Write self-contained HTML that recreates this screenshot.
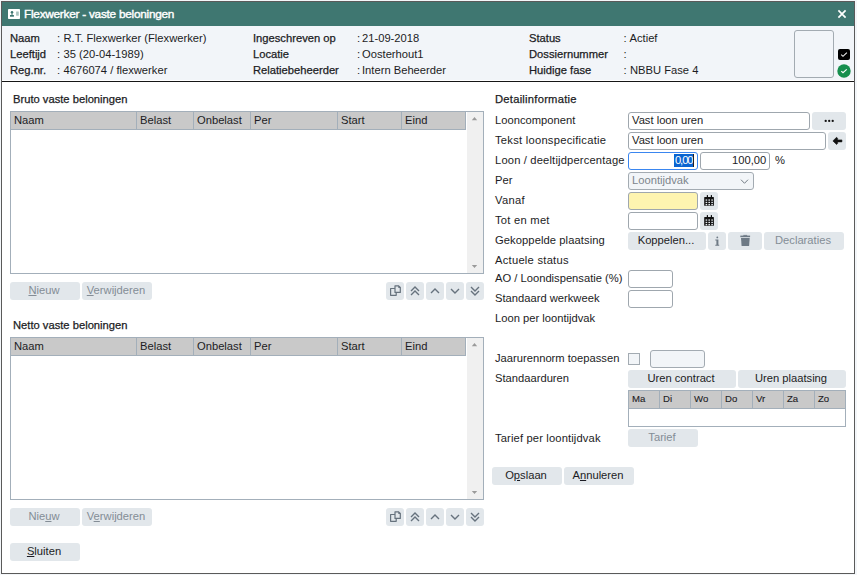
<!DOCTYPE html><html><head><meta charset="utf-8"><style>
*{margin:0;padding:0;box-sizing:border-box}
html,body{width:857px;height:575px;overflow:hidden;background:#f3f6f9}
body{position:relative;font-family:"Liberation Sans",sans-serif;font-size:11.2px;color:#1c1c24}
.a{position:absolute}
.t{position:absolute;white-space:nowrap;line-height:16px;height:16px}
.m{-webkit-text-stroke:0.25px #1c1c24}
.btn{position:absolute;background:#e2e7eb;border-radius:3px;text-align:center;line-height:16px;white-space:nowrap;padding-right:2px}
.dis{color:#848d96}
.inp{position:absolute;background:#fff;border:1px solid #9fa7ae;border-radius:3px}
.u{text-decoration:underline;text-underline-offset:0.5px}
</style></head><body><div class="a" style="left:0px;top:0px;width:857px;height:575px;background:#f3f6f9"></div>
<div class="a" style="left:1px;top:1px;width:854px;height:573px;border:1px solid #5a5a5a;background:#fff"></div>
<div class="a" style="left:2px;top:2px;width:852px;height:24px;background:#3f7771"></div>
<div class="a" style="left:2px;top:26px;width:852px;height:54px;background:#f2f5f9"></div>
<div class="a" style="left:2px;top:81px;width:852px;height:1px;background:#161616"></div>
<svg class="a" style="left:8px;top:9px" width="12" height="10" viewBox="0 0 12 10"><rect x="0" y="0" width="12" height="10" rx="0.8" fill="#fff"/><circle cx="4" cy="3.2" r="1.25" fill="#3f7771"/><rect x="3.5" y="3.5" width="1" height="2.8" fill="#3f7771"/><rect x="2" y="6" width="3.9" height="1.7" fill="#3f7771"/><rect x="8.1" y="2.4" width="2.7" height="4.4" rx="0.4" fill="#a9c3bf"/></svg>
<div class="t " style="left:24px;top:6px;color:#fff;font-size:11.8px;-webkit-text-stroke:0.4px #fff;letter-spacing:-0.25px">Flexwerker - vaste beloningen</div>
<svg class="a" style="left:837px;top:9px" width="11" height="11" viewBox="0 0 11 11"><path d="M1.4 1.4L8.6 8.6M8.6 1.4L1.4 8.6" stroke="#fff" stroke-width="1.7"/></svg>
<div class="t m" style="left:10px;top:30px;">Naam</div>
<div class="t " style="left:57px;top:30px;">:</div>
<div class="t " style="left:63.5px;top:30px;">R.T. Flexwerker (Flexwerker)</div>
<div class="t m" style="left:253px;top:30px;">Ingeschreven op</div>
<div class="t " style="left:357px;top:30px;">:</div>
<div class="t " style="left:362px;top:30px;">21-09-2018</div>
<div class="t m" style="left:529px;top:30px;">Status</div>
<div class="t " style="left:623.5px;top:30px;">:</div>
<div class="t " style="left:629.5px;top:30px;">Actief</div>
<div class="t m" style="left:10px;top:46px;">Leeftijd</div>
<div class="t " style="left:57px;top:46px;">:</div>
<div class="t " style="left:63.5px;top:46px;">35 (20-04-1989)</div>
<div class="t m" style="left:253px;top:46px;">Locatie</div>
<div class="t " style="left:357px;top:46px;">:</div>
<div class="t " style="left:362px;top:46px;">Oosterhout1</div>
<div class="t m" style="left:529px;top:46px;">Dossiernummer</div>
<div class="t " style="left:623.5px;top:46px;">:</div>
<div class="t " style="left:630px;top:46px;"></div>
<div class="t m" style="left:10px;top:62px;">Reg.nr.</div>
<div class="t " style="left:57px;top:62px;">:</div>
<div class="t " style="left:63.5px;top:62px;">4676074 / flexwerker</div>
<div class="t m" style="left:253px;top:62px;">Relatiebeheerder</div>
<div class="t " style="left:357px;top:62px;">:</div>
<div class="t " style="left:362px;top:62px;">Intern Beheerder</div>
<div class="t m" style="left:529px;top:62px;">Huidige fase</div>
<div class="t " style="left:623.5px;top:62px;">:</div>
<div class="t " style="left:630px;top:62px;">NBBU Fase 4</div>
<div class="a" style="left:794px;top:30px;width:40px;height:48px;border:1px solid #a3abb2;border-radius:3px;background:#f2f5f9"></div>
<svg class="a" style="left:838px;top:49px" width="12" height="11" viewBox="0 0 12 11"><rect x="0" y="0" width="12" height="11" rx="2" fill="#000"/><path d="M3.2 5.6L5 7.3L8.9 3.6" stroke="#eee" stroke-width="1.1" fill="none"/></svg>
<svg class="a" style="left:837px;top:64.2px" width="14" height="14" viewBox="0 0 14 14"><circle cx="7" cy="7" r="6.7" fill="#168f4e"/><path d="M4.3 7.1L6 8.7L9.7 5.3" stroke="#fff" stroke-width="1.15" fill="none"/></svg>
<div class="t m" style="left:13px;top:91px;">Bruto vaste beloningen</div>
<div class="a" style="left:10px;top:111px;width:474px;height:163px;border:1px solid #a3afba;background:#fff"></div>
<div class="a" style="left:11px;top:112px;width:455px;height:18px;background:#c9c9c9;border-bottom:1px solid #a3afba;border-right:1px solid #a3afba"></div>
<div class="t " style="left:14px;top:112px;">Naam</div>
<div class="a" style="left:136px;top:112px;width:1px;height:18px;background:#a3afba"></div>
<div class="t " style="left:140px;top:112px;">Belast</div>
<div class="a" style="left:193px;top:112px;width:1px;height:18px;background:#a3afba"></div>
<div class="t " style="left:197px;top:112px;">Onbelast</div>
<div class="a" style="left:250px;top:112px;width:1px;height:18px;background:#a3afba"></div>
<div class="t " style="left:254px;top:112px;">Per</div>
<div class="a" style="left:337px;top:112px;width:1px;height:18px;background:#a3afba"></div>
<div class="t " style="left:341px;top:112px;">Start</div>
<div class="a" style="left:401px;top:112px;width:1px;height:18px;background:#a3afba"></div>
<div class="t " style="left:405px;top:112px;">Eind</div>
<div class="a" style="left:467px;top:112px;width:16px;height:161px;background:#f0f0f0"></div>
<svg class="a" style="left:471px;top:116px" width="7" height="5" viewBox="0 0 7 5"><path d="M0.8 4.2L3.5 1L6.2 4.2Z" fill="#9a9a9a"/></svg>
<svg class="a" style="left:471px;top:264px" width="7" height="5" viewBox="0 0 7 5"><path d="M0.8 0.9L3.5 4.1L6.2 0.9Z" fill="#9a9a9a"/></svg>
<div class="btn dis" style="left:10px;top:282px;width:70px;height:18px"><span class="u">N</span>ieuw</div>
<div class="btn dis" style="left:82px;top:282px;width:70px;height:18px"><span class="u">V</span>erwijderen</div>
<div class="btn" style="left:386px;top:282px;width:18px;height:18px"><svg width="18" height="18" viewBox="0 0 18 18" style="display:block"><path d="M9 10.4V3.8H12.6L14.3 5.5V10.4Z" fill="none" stroke="#66727d" stroke-width="1.2" stroke-linejoin="round"/><path d="M12.3 3.6V6H14.6Z" fill="#66727d"/><path d="M9 6.5H4.6V13.3H10.2V10.4" fill="none" stroke="#66727d" stroke-width="1.2" stroke-linejoin="round"/></svg></div>
<div class="btn" style="left:406px;top:282px;width:18px;height:18px"><svg width="18" height="18" viewBox="0 0 18 18" style="display:block"><path d="M5 9L9 5L13 9M5 13L9 9L13 13" fill="none" stroke="#66727d" stroke-width="1.4"/></svg></div>
<div class="btn" style="left:426px;top:282px;width:18px;height:18px"><svg width="18" height="18" viewBox="0 0 18 18" style="display:block"><path d="M5 11L9 7L13 11" fill="none" stroke="#66727d" stroke-width="1.4"/></svg></div>
<div class="btn" style="left:446px;top:282px;width:18px;height:18px"><svg width="18" height="18" viewBox="0 0 18 18" style="display:block"><path d="M5 7L9 11L13 7" fill="none" stroke="#66727d" stroke-width="1.4"/></svg></div>
<div class="btn" style="left:466px;top:282px;width:18px;height:18px"><svg width="18" height="18" viewBox="0 0 18 18" style="display:block"><path d="M5 5L9 9L13 5M5 9L9 13L13 9" fill="none" stroke="#66727d" stroke-width="1.4"/></svg></div>
<div class="t m" style="left:13px;top:317px;">Netto vaste beloningen</div>
<div class="a" style="left:10px;top:337px;width:474px;height:163px;border:1px solid #a3afba;background:#fff"></div>
<div class="a" style="left:11px;top:338px;width:455px;height:18px;background:#c9c9c9;border-bottom:1px solid #a3afba;border-right:1px solid #a3afba"></div>
<div class="t " style="left:14px;top:338px;">Naam</div>
<div class="a" style="left:136px;top:338px;width:1px;height:18px;background:#a3afba"></div>
<div class="t " style="left:140px;top:338px;">Belast</div>
<div class="a" style="left:193px;top:338px;width:1px;height:18px;background:#a3afba"></div>
<div class="t " style="left:197px;top:338px;">Onbelast</div>
<div class="a" style="left:250px;top:338px;width:1px;height:18px;background:#a3afba"></div>
<div class="t " style="left:254px;top:338px;">Per</div>
<div class="a" style="left:337px;top:338px;width:1px;height:18px;background:#a3afba"></div>
<div class="t " style="left:341px;top:338px;">Start</div>
<div class="a" style="left:401px;top:338px;width:1px;height:18px;background:#a3afba"></div>
<div class="t " style="left:405px;top:338px;">Eind</div>
<div class="a" style="left:467px;top:338px;width:16px;height:161px;background:#f0f0f0"></div>
<svg class="a" style="left:471px;top:342px" width="7" height="5" viewBox="0 0 7 5"><path d="M0.8 4.2L3.5 1L6.2 4.2Z" fill="#9a9a9a"/></svg>
<svg class="a" style="left:471px;top:490px" width="7" height="5" viewBox="0 0 7 5"><path d="M0.8 0.9L3.5 4.1L6.2 0.9Z" fill="#9a9a9a"/></svg>
<div class="btn dis" style="left:10px;top:508px;width:70px;height:18px">Nie<span class="u">u</span>w</div>
<div class="btn dis" style="left:82px;top:508px;width:70px;height:18px">V<span class="u">e</span>rwijderen</div>
<div class="btn" style="left:386px;top:508px;width:18px;height:18px"><svg width="18" height="18" viewBox="0 0 18 18" style="display:block"><path d="M9 10.4V3.8H12.6L14.3 5.5V10.4Z" fill="none" stroke="#66727d" stroke-width="1.2" stroke-linejoin="round"/><path d="M12.3 3.6V6H14.6Z" fill="#66727d"/><path d="M9 6.5H4.6V13.3H10.2V10.4" fill="none" stroke="#66727d" stroke-width="1.2" stroke-linejoin="round"/></svg></div>
<div class="btn" style="left:406px;top:508px;width:18px;height:18px"><svg width="18" height="18" viewBox="0 0 18 18" style="display:block"><path d="M5 9L9 5L13 9M5 13L9 9L13 13" fill="none" stroke="#66727d" stroke-width="1.4"/></svg></div>
<div class="btn" style="left:426px;top:508px;width:18px;height:18px"><svg width="18" height="18" viewBox="0 0 18 18" style="display:block"><path d="M5 11L9 7L13 11" fill="none" stroke="#66727d" stroke-width="1.4"/></svg></div>
<div class="btn" style="left:446px;top:508px;width:18px;height:18px"><svg width="18" height="18" viewBox="0 0 18 18" style="display:block"><path d="M5 7L9 11L13 7" fill="none" stroke="#66727d" stroke-width="1.4"/></svg></div>
<div class="btn" style="left:466px;top:508px;width:18px;height:18px"><svg width="18" height="18" viewBox="0 0 18 18" style="display:block"><path d="M5 5L9 9L13 5M5 9L9 13L13 9" fill="none" stroke="#66727d" stroke-width="1.4"/></svg></div>
<div class="btn" style="left:10px;top:543px;width:70px;height:18px"><span class="u">S</span>luiten</div>
<div class="t m" style="left:495px;top:91px;letter-spacing:0.25px">Detailinformatie</div>
<div class="t " style="left:495px;top:112px;">Looncomponent</div>
<div class="t " style="left:495px;top:132px;letter-spacing:0.25px">Tekst loonspecificatie</div>
<div class="t " style="left:495px;top:152px;letter-spacing:0.16px">Loon / deeltijdpercentage</div>
<div class="t " style="left:495px;top:172px;">Per</div>
<div class="t " style="left:495px;top:192px;letter-spacing:0.3px">Vanaf</div>
<div class="t " style="left:495px;top:212px;letter-spacing:0.25px">Tot en met</div>
<div class="t " style="left:495px;top:232px;letter-spacing:0.08px">Gekoppelde plaatsing</div>
<div class="t " style="left:495px;top:252px;letter-spacing:0.25px">Actuele status</div>
<div class="t " style="left:495px;top:270px;">AO / Loondispensatie (%)</div>
<div class="t " style="left:495px;top:290px;">Standaard werkweek</div>
<div class="t " style="left:495px;top:310px;">Loon per loontijdvak</div>
<div class="t " style="left:495px;top:350px;">Jaarurennorm toepassen</div>
<div class="t " style="left:495px;top:370px;">Standaarduren</div>
<div class="t " style="left:495px;top:430px;letter-spacing:0.14px">Tarief per loontijdvak</div>
<div class="inp" style="left:628px;top:112px;width:182px;height:18px;"></div>
<div class="t " style="left:632px;top:112px;">Vast loon uren</div>
<div class="btn" style="left:812px;top:112px;width:34px;height:18px"><svg width="34" height="18" viewBox="0 0 34 18" style="display:block"><circle cx="13.7" cy="8.9" r="1.15" fill="#111"/><circle cx="17.2" cy="8.9" r="1.15" fill="#111"/><circle cx="20.7" cy="8.9" r="1.15" fill="#111"/></svg></div>
<div class="inp" style="left:628px;top:132px;width:198px;height:18px;"></div>
<div class="t " style="left:632px;top:132px;">Vast loon uren</div>
<div class="btn" style="left:828px;top:132px;width:18px;height:18px"><svg width="18" height="18" viewBox="0 0 18 18" style="display:block"><path d="M4.9 8.9L8.6 5.3L9.6 6.3V7.9H13.9V9.9H9.6V11.5L8.6 12.5Z" fill="#111" stroke="#111" stroke-width="0.6" stroke-linejoin="round"/></svg></div>
<div class="inp" style="left:628px;top:152px;width:70px;height:18px;border-color:#3a86f0"></div>
<div class="a" style="left:674px;top:154px;width:19px;height:13px;background:#0a64d0"></div>
<div class="t " style="left:675px;top:152px;color:#fff;letter-spacing:-1.1px">0,00</div>
<div class="a" style="left:693px;top:154px;width:1px;height:13px;background:#222"></div>
<div class="inp" style="left:700px;top:152px;width:70px;height:18px;"></div>
<div class="t " style="left:732px;top:152px;">100,00</div>
<div class="t " style="left:775px;top:152px;">%</div>
<div class="inp" style="left:628px;top:172px;width:126px;height:18px;background:#f2f5f8;border-color:#a3abb2"></div>
<div class="t " style="left:632px;top:172px;color:#7d858c">Loontijdvak</div>
<svg class="a" style="left:740px;top:179px" width="10" height="6" viewBox="0 0 10 6"><path d="M1 0.7L4.5 4.3L8 0.7" fill="none" stroke="#737c84" stroke-width="1"/></svg>
<div class="inp" style="left:628px;top:192px;width:70px;height:18px;background:#fef4b0"></div>
<div class="inp" style="left:628px;top:212px;width:70px;height:18px;"></div>
<div class="btn" style="left:700px;top:192px;width:18px;height:18px"><svg width="18" height="18" viewBox="0 0 18 18" style="display:block"><rect x="4.2" y="5" width="9.7" height="8.8" rx="0.6" fill="#111"/><rect x="6.8" y="3.1" width="1.2" height="2.5" fill="#111"/><rect x="10.8" y="3.1" width="1.2" height="2.5" fill="#111"/><rect x="5.6" y="7.4" width="1.6" height="1.3" fill="#e2e7eb"/><rect x="8.4" y="7.4" width="1.6" height="1.3" fill="#e2e7eb"/><rect x="11.3" y="7.4" width="1.6" height="1.3" fill="#e2e7eb"/><rect x="5.6" y="9.8" width="1.6" height="1.3" fill="#e2e7eb"/><rect x="8.4" y="9.8" width="1.6" height="1.3" fill="#e2e7eb"/><rect x="11.3" y="9.8" width="1.6" height="1.3" fill="#e2e7eb"/><rect x="5.6" y="12.0" width="1.6" height="1.3" fill="#e2e7eb"/><rect x="8.4" y="12.0" width="1.6" height="1.3" fill="#e2e7eb"/><rect x="11.3" y="12.0" width="1.6" height="1.3" fill="#e2e7eb"/></svg></div>
<div class="btn" style="left:700px;top:212px;width:18px;height:18px"><svg width="18" height="18" viewBox="0 0 18 18" style="display:block"><rect x="4.2" y="5" width="9.7" height="8.8" rx="0.6" fill="#111"/><rect x="6.8" y="3.1" width="1.2" height="2.5" fill="#111"/><rect x="10.8" y="3.1" width="1.2" height="2.5" fill="#111"/><rect x="5.6" y="7.4" width="1.6" height="1.3" fill="#e2e7eb"/><rect x="8.4" y="7.4" width="1.6" height="1.3" fill="#e2e7eb"/><rect x="11.3" y="7.4" width="1.6" height="1.3" fill="#e2e7eb"/><rect x="5.6" y="9.8" width="1.6" height="1.3" fill="#e2e7eb"/><rect x="8.4" y="9.8" width="1.6" height="1.3" fill="#e2e7eb"/><rect x="11.3" y="9.8" width="1.6" height="1.3" fill="#e2e7eb"/><rect x="5.6" y="12.0" width="1.6" height="1.3" fill="#e2e7eb"/><rect x="8.4" y="12.0" width="1.6" height="1.3" fill="#e2e7eb"/><rect x="11.3" y="12.0" width="1.6" height="1.3" fill="#e2e7eb"/></svg></div>
<div class="btn" style="left:628px;top:232px;width:78px;height:18px;line-height:16px">Koppelen...</div>
<div class="btn" style="left:708px;top:232px;width:18px;height:18px"><svg width="18" height="18" viewBox="0 0 18 18" style="display:block"><circle cx="9.3" cy="5.4" r="0.9" fill="#6e7a85"/><path d="M7.3 7.4H10.4V12.7H11.2V13.8H7.3V12.7H8.4V8.5H7.3Z" fill="#6e7a85"/></svg></div>
<div class="btn" style="left:728px;top:232px;width:34px;height:18px"><svg width="34" height="18" viewBox="0 0 34 18" style="display:block"><path d="M12.3 3.6H22.1V5.2H12.3Z" fill="#6e7a85"/><path d="M15.3 2.9H19.2V3.8H15.3Z" fill="#6e7a85"/><path d="M13 5.9H21.7L21.1 13.9H13.6Z" fill="#6e7a85"/></svg></div>
<div class="btn dis" style="left:764px;top:232px;width:80px;height:18px;line-height:16px">Declaraties</div>
<div class="inp" style="left:628px;top:270px;width:45px;height:18px;"></div>
<div class="inp" style="left:628px;top:290px;width:45px;height:18px;"></div>
<div class="a" style="left:628px;top:353px;width:12px;height:12px;border:1px solid #a3abb2;background:#f2f5f8"></div>
<div class="inp" style="left:650px;top:350px;width:55px;height:18px;background:#f2f5f8;border-color:#a3abb2"></div>
<div class="btn" style="left:628px;top:370px;width:108px;height:18px;line-height:16px">Uren contract</div>
<div class="btn" style="left:738px;top:370px;width:108px;height:18px;line-height:16px">Uren plaatsing</div>
<div class="a" style="left:628px;top:390px;width:218px;height:37px;border:1px solid #a3afba;background:#fff"></div>
<div class="a" style="left:629px;top:391px;width:216px;height:18px;background:#c9c9c9;border-bottom:1px solid #a3afba"></div>
<div class="t" style="left:632px;top:390px;font-size:9.6px;line-height:17px;-webkit-text-stroke:0.1px #1c1c24">Ma</div>
<div class="a" style="left:659px;top:391px;width:1px;height:18px;background:#a3afba"></div>
<div class="t" style="left:663px;top:390px;font-size:9.6px;line-height:17px;-webkit-text-stroke:0.1px #1c1c24">Di</div>
<div class="a" style="left:690px;top:391px;width:1px;height:18px;background:#a3afba"></div>
<div class="t" style="left:694px;top:390px;font-size:9.6px;line-height:17px;-webkit-text-stroke:0.1px #1c1c24">Wo</div>
<div class="a" style="left:721px;top:391px;width:1px;height:18px;background:#a3afba"></div>
<div class="t" style="left:725px;top:390px;font-size:9.6px;line-height:17px;-webkit-text-stroke:0.1px #1c1c24">Do</div>
<div class="a" style="left:752px;top:391px;width:1px;height:18px;background:#a3afba"></div>
<div class="t" style="left:756px;top:390px;font-size:9.6px;line-height:17px;-webkit-text-stroke:0.1px #1c1c24">Vr</div>
<div class="a" style="left:783px;top:391px;width:1px;height:18px;background:#a3afba"></div>
<div class="t" style="left:787px;top:390px;font-size:9.6px;line-height:17px;-webkit-text-stroke:0.1px #1c1c24">Za</div>
<div class="a" style="left:814px;top:391px;width:1px;height:18px;background:#a3afba"></div>
<div class="t" style="left:818px;top:390px;font-size:9.6px;line-height:17px;-webkit-text-stroke:0.1px #1c1c24">Zo</div>
<div class="btn dis" style="left:628px;top:429px;width:70px;height:18px;line-height:16px">Tarief</div>
<div class="btn" style="left:492px;top:467px;width:70px;height:18px">O<span class="u">p</span>slaan</div>
<div class="btn" style="left:564px;top:467px;width:70px;height:18px">A<span class="u">n</span>nuleren</div></body></html>
